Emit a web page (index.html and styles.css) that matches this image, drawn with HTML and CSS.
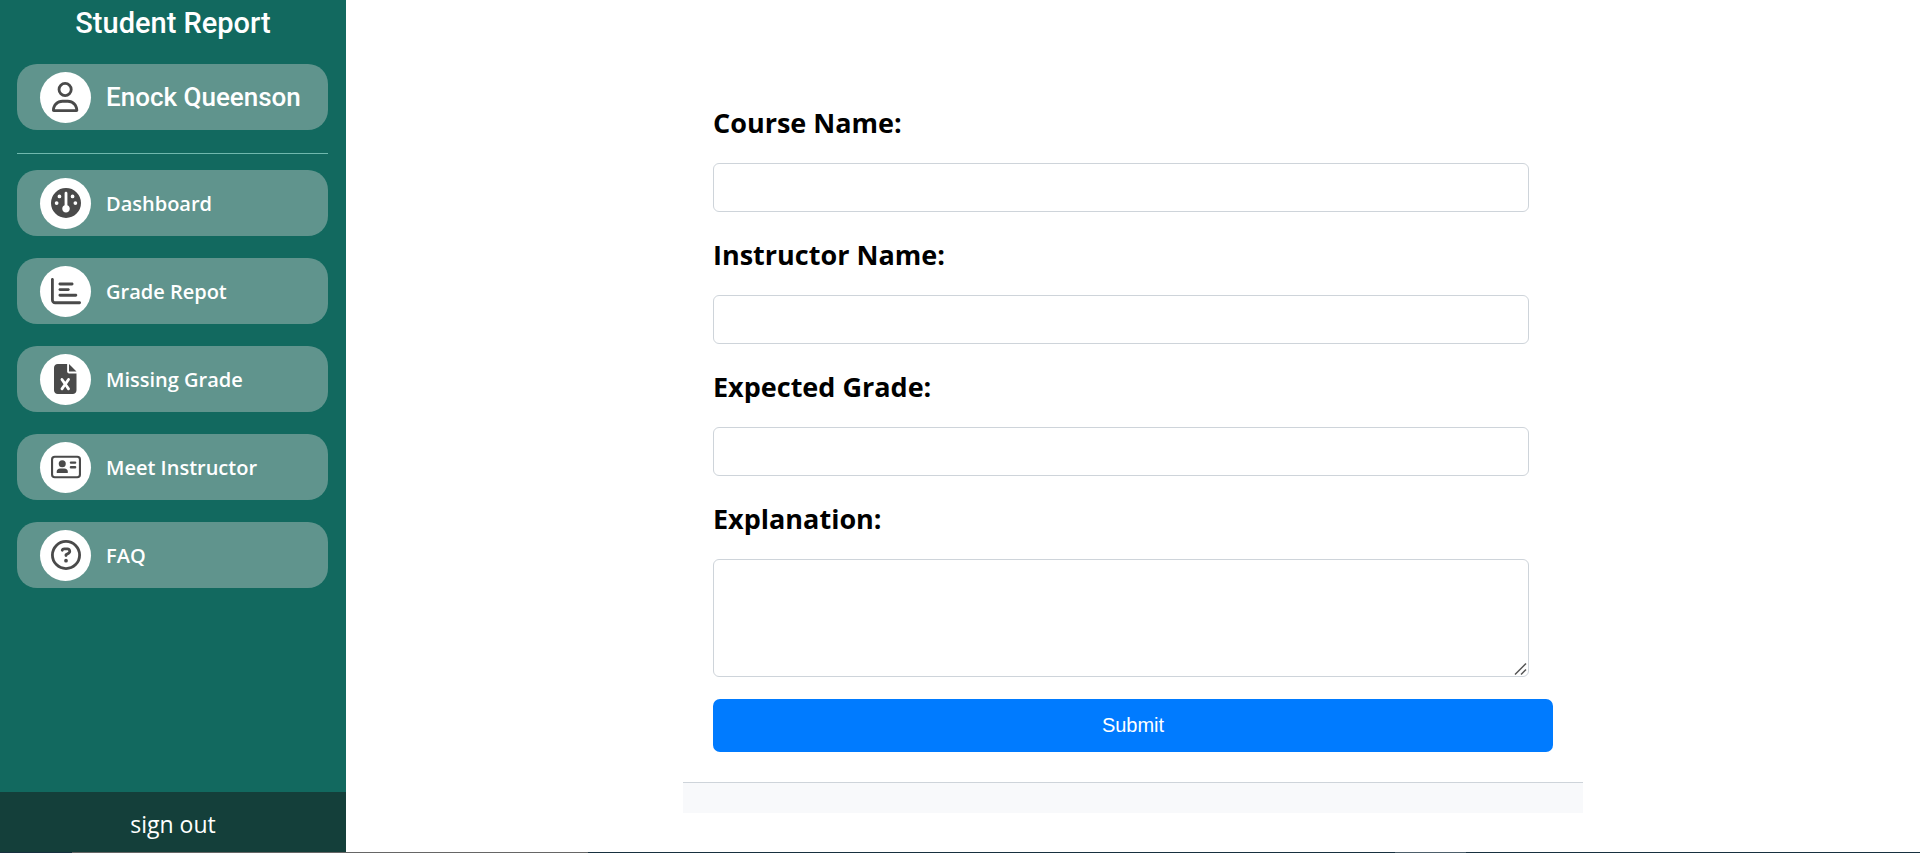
FILE: index.html
```html
<!DOCTYPE html>
<html lang="en">
<head>
<meta charset="utf-8">
<title>Student Report</title>
<meta name="viewport" content="width=device-width, initial-scale=1">
<link rel="stylesheet" href="styles.css">
</head>
<body>
<div class="layout">
  <aside class="sidebar">
    <h1 class="brand">Student Report</h1>
    <div class="card user">
      <span class="badge"><svg class="icon" viewBox="0 0 448 512" aria-hidden="true"><path d="M304 128a80 80 0 1 0-160 0 80 80 0 1 0 160 0zM96 128a128 128 0 1 1 256 0A128 128 0 1 1 96 128zM49.300 464H398.700c-8.900-63.300-63.300-112-129-112H178.300c-65.700 0-120.100 48.700-129 112zM0 482.300C0 383.800 79.800 304 178.300 304h91.400C368.200 304 448 383.800 448 482.300c0 16.400-13.300 29.700-29.700 29.700H29.700C13.300 512 0 498.700 0 482.300z"/></svg></span>
      <span class="user-name">Enock Queenson</span>
    </div>
    <hr class="divider">
    <nav class="menu">
      <a class="card" href="#"><span class="badge"><svg class="icon" viewBox="0 0 512 512" aria-hidden="true"><path d="M0 256a256 256 0 1 1 512 0A256 256 0 1 1 0 256zm320 96c0-26.900-16.500-49.900-40-59.300V88c0-13.300-10.700-24-24-24s-24 10.700-24 24V292.700c-23.500 9.500-40 32.500-40 59.300c0 35.300 28.700 64 64 64s64-28.700 64-64zM144 176a32 32 0 1 0 0-64 32 32 0 1 0 0 64zm-16 80a32 32 0 1 0-64 0 32 32 0 1 0 64 0zm288 32a32 32 0 1 0 0-64 32 32 0 1 0 0 64zM400 144a32 32 0 1 0-64 0 32 32 0 1 0 64 0z"/></svg></span>Dashboard</a>
      <a class="card" href="#"><span class="badge"><svg class="icon" viewBox="0 0 512 512" aria-hidden="true"><path d="M24 32c13.300 0 24 10.700 24 24V408c0 13.300 10.700 24 24 24H488c13.300 0 24 10.700 24 24s-10.700 24-24 24H72c-39.800 0-72-32.200-72-72V56C0 42.700 10.700 32 24 32zM128 136c0-13.300 10.700-24 24-24l208 0c13.300 0 24 10.700 24 24s-10.700 24-24 24l-208 0c-13.300 0-24-10.700-24-24zm24 72H296c13.300 0 24 10.700 24 24s-10.700 24-24 24H152c-13.300 0-24-10.700-24-24s10.700-24 24-24zm0 96H424c13.300 0 24 10.700 24 24s-10.700 24-24 24H152c-13.300 0-24-10.700-24-24s10.700-24 24-24z"/></svg></span>Grade Repot</a>
      <a class="card" href="#"><span class="badge"><svg class="icon" viewBox="0 0 384 512" aria-hidden="true"><path d="M64 0C28.700 0 0 28.700 0 64V448c0 35.300 28.700 64 64 64H320c35.300 0 64-28.700 64-64V160H256c-17.700 0-32-14.300-32-32V0H64zM256 0V128H384L256 0zM155.700 250.200L192 302.100l36.300-51.900c7.600-10.900 22.600-13.500 33.400-5.900s13.500 22.600 5.900 33.400L221.300 344l46.400 66.200c7.600 10.900 5 25.800-5.900 33.400s-25.800 5-33.400-5.900L192 385.800l-36.300 51.900c-7.600 10.900-22.600 13.500-33.400 5.900s-13.500-22.600-5.900-33.400L162.700 344l-46.400-66.200c-7.600-10.900-5-25.800 5.900-33.400s25.800-5 33.400 5.900z"/></svg></span>Missing Grade</a>
      <a class="card" href="#"><span class="badge"><svg class="icon" viewBox="0 0 512 512" aria-hidden="true"><path fill-rule="evenodd" d="M64 64h384a64 64 0 0 1 64 64v256a64 64 0 0 1-64 64H64a64 64 0 0 1-64-64V128a64 64 0 0 1 64-64zm0 36a28 28 0 0 0-28 28v256a28 28 0 0 0 28 28h384a28 28 0 0 0 28-28V128a28 28 0 0 0-28-28z"/><circle cx="192" cy="200" r="60"/><path d="M160 280h64a64 64 0 0 1 64 64c0 8-7 16-16 16H112c-9 0-16-8-16-16a64 64 0 0 1 64-64zM340 160h72a20 20 0 0 1 0 40h-72a20 20 0 0 1 0-40zM340 240h72a20 20 0 0 1 0 40h-72a20 20 0 0 1 0-40z"/></svg></span>Meet Instructor</a>
      <a class="card" href="#"><span class="badge"><svg class="icon" viewBox="0 0 512 512" aria-hidden="true"><path d="M464 256A208 208 0 1 0 48 256a208 208 0 1 0 416 0zM0 256a256 256 0 1 1 512 0A256 256 0 1 1 0 256zm169.800-90.700c7.900-22.300 29.100-37.300 52.800-37.300h58.300c34.900 0 63.100 28.300 63.100 63.100c0 22.600-12.100 43.500-31.700 54.800L280 264.400c-.2 13-10.900 23.600-24 23.600c-13.300 0-24-10.700-24-24V250.500c0-8.600 4.600-16.500 12.100-20.800l44.300-25.400c4.700-2.700 7.600-7.700 7.600-13.100c0-8.400-6.800-15.100-15.100-15.100H222.600c-3.400 0-6.400 2.100-7.500 5.300l-.4 1.200c-4.400 12.500-18.200 19-30.600 14.600s-19-18.200-14.600-30.600l.4-1.200zM224 352a32 32 0 1 1 64 0 32 32 0 1 1-64 0z"/></svg></span>FAQ</a>
    </nav>
    <button class="sign-out" type="button">sign out</button>
  </aside>
  <main class="main">
    <section class="panel">
      <form class="form">
        <label class="label" for="course">Course Name:</label>
        <input class="field" id="course" type="text">
        <label class="label" for="instructor">Instructor Name:</label>
        <input class="field" id="instructor" type="text">
        <label class="label" for="grade">Expected Grade:</label>
        <input class="field" id="grade" type="text">
        <label class="label" for="explanation">Explanation:</label>
        <textarea class="field area" id="explanation"></textarea>
        <button class="submit" type="submit">Submit</button>
      </form>
      <footer class="panel-footer"></footer>
    </section>
  </main>
</div>
<div class="bottom-edge"></div>
</body>
</html>
```
FILE: styles.css
```css
* { box-sizing: border-box; }

body {
  margin: 0;
  min-height: 100vh;
  display: flex;
  flex-direction: column;
  background: #fff;
  font-family: "Segoe UI", "Open Sans", "Noto Sans", sans-serif;
}

.layout { flex: 1; display: flex; }

.sidebar {
  width: 346px;
  flex: none;
  display: flex;
  flex-direction: column;
  background: #12695f;
  color: #fff;
}

.brand {
  margin: 0 0 18px;
  line-height: 46px;
  text-align: center;
  font-family: Roboto, sans-serif;
  font-size: 29px;
  font-weight: 500;
}

.card {
  height: 66px;
  padding-left: 23px;
  display: flex;
  align-items: center;
  gap: 15px;
  border-radius: 20px;
  background: #60948d;
  color: #fff;
  font-size: 20px;
  font-weight: 600;
  text-decoration: none;
}

.user { margin: 0 18px 0 17px; }

.user-name {
  font-family: Roboto, sans-serif;
  font-size: 26px;
  font-weight: 500;
}

.badge {
  width: 51px;
  height: 51px;
  flex: none;
  display: grid;
  place-items: center;
  border-radius: 50%;
  background: #fff;
}

.icon { height: 30px; fill: #4a4a4a; }

.divider {
  margin: 23px 18px 16px 17px;
  border: 0;
  border-top: 1px solid #70b9ae;
}

.menu {
  flex: 1;
  padding: 0 18px 24px 17px;
  display: flex;
  flex-direction: column;
  gap: 22px;
}

.sign-out {
  height: 60px;
  padding: 4px 0 0;
  border: 0;
  background: #143f3a;
  color: #fff;
  font-family: inherit;
  font-size: 23px;
}

.main { flex: 1; padding: 72px 24px 39px; }

.panel { max-width: 900px; margin: 0 auto; }

.form {
  padding: 30px;
  display: flex;
  flex-direction: column;
}

.label {
  margin-bottom: 20px;
  line-height: 41px;
  color: #000;
  font-size: 27px;
  font-weight: 700;
}

.field {
  height: 49px;
  margin: 0 24px 22px 0;
  padding: 12px;
  border: 1px solid #ced4da;
  border-radius: 6px;
  background: #fff;
  font: inherit;
  font-size: 20px;
}

.area { height: 118px; resize: vertical; }

.area::-webkit-resizer {
  background: url("data:image/svg+xml,%3Csvg xmlns='http://www.w3.org/2000/svg' viewBox='0 0 15 15'%3E%3Cpath d='M2 13.5 13 2.500M8 13.500 13 8.500' stroke='%23555' stroke-width='1.500' fill='none'/%3E%3C/svg%3E") no-repeat;
}

.submit {
  height: 53px;
  border: 0;
  border-radius: 7px;
  background: #007bff;
  color: #fff;
  font-family: Arial, "Liberation Sans", sans-serif;
  font-size: 20px;
}

.panel-footer {
  height: 31px;
  border-top: 1px solid #ced4da;
  background: #f8f9fb;
}

.bottom-edge {
  height: 1px;
  background: linear-gradient(90deg, #17303f 0 72px, #666 72px 588px, #17303f 588px 1395px, #4d5f6b 1395px 1466px, #17303f 1466px);
}
```
